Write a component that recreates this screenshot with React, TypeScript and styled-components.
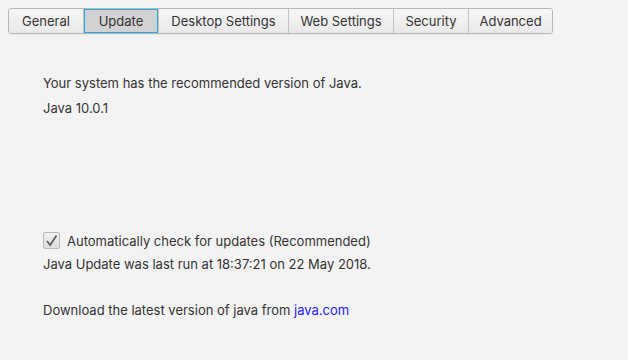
import { useState } from 'react'
import styled, { createGlobalStyle } from 'styled-components'

const GlobalStyle = createGlobalStyle`
  html, body {
    margin: 0;
    padding: 0;
    background: #f3f3f3;
  }
  body {
    font-family: Inter, "Liberation Sans", sans-serif;
    font-size: 13px;
    color: #333;
  }
`

const Page = styled.div`
  width: 628px;
  height: 360px;
  box-sizing: border-box;
  padding: 8px 0 0 8px;
  display: flex;
  flex-direction: column;
`

const TabBar = styled.div`
  display: flex;
  align-self: flex-start;
  border: 1px solid #b6b6b6;
  border-radius: 3px;
  overflow: hidden;
  height: 24px;
  box-shadow: 0 1px 0 rgba(0, 0, 0, 0.04);
`

const Tab = styled.button<{ $active?: boolean; $w: number }>`
  width: ${({ $w }) => $w}px;
  height: 24px;
  margin: 0;
  padding: 0;
  font: inherit;
  font-size: 13px;
  color: #333;
  cursor: default;
  border: none;
  border-left: 1px solid #c4c4c4;
  background: ${({ $active }) =>
    $active ? '#d2d2d2' : 'linear-gradient(#f6f6f6, #e9e9e9)'};
  box-shadow: ${({ $active }) => ($active ? 'inset 0 0 0 1px #2ba8df' : 'none')};
  &:first-child {
    border-left: none;
  }
`

const Content = styled.div`
  padding: 41px 0 0 35px;
  display: flex;
  flex-direction: column;
`

const Line = styled.div<{ $gap?: number }>`
  line-height: 16px;
  margin-top: ${({ $gap }) => $gap ?? 0}px;
`

const CheckRow = styled.label`
  display: flex;
  align-items: center;
  gap: 7px;
  margin-top: 116px;
  line-height: 16px;
`

const Box = styled.span`
  width: 15px;
  height: 15px;
  border: 1px solid #b9b9b9;
  border-radius: 2px;
  background: linear-gradient(#f0f0f0, #dedede);
  display: flex;
  align-items: center;
  justify-content: center;
`

const Link = styled.a`
  color: #1c1cf0;
  text-decoration: none;
`

const tabs: [string, number][] = [
  ['General', 74],
  ['Update', 75],
  ['Desktop Settings', 130],
  ['Web Settings', 105],
  ['Security', 75],
  ['Advanced', 84],
]

export default function App() {
  const [active, setActive] = useState('Update')
  const [checked, setChecked] = useState(true)

  return (
    <Page>
      <GlobalStyle />
      <TabBar>
        {tabs.map(([name, w]) => (
          <Tab key={name} $w={w} $active={active === name} onClick={() => setActive(name)}>
            {name}
          </Tab>
        ))}
      </TabBar>
      <Content>
        <Line>Your system has the recommended version of Java.</Line>
        <Line $gap={9}>Java 10.0.1</Line>
        <CheckRow onClick={() => setChecked(!checked)}>
          <Box>
            {checked && (
              <svg width="13" height="13" viewBox="0 0 13 13">
                <path d="M2 7 L5.2 11 L11.5 1.5" fill="none" stroke="#5a5a5a" strokeWidth="1.7" />
              </svg>
            )}
          </Box>
          Automatically check for updates (Recommended)
        </CheckRow>
        <Line $gap={7}>Java Update was last run at 18:37:21 on 22 May 2018.</Line>
        <Line $gap={30}>
          Download the latest version of java from <Link href="#">java.com</Link>
        </Line>
      </Content>
    </Page>
  )
}
